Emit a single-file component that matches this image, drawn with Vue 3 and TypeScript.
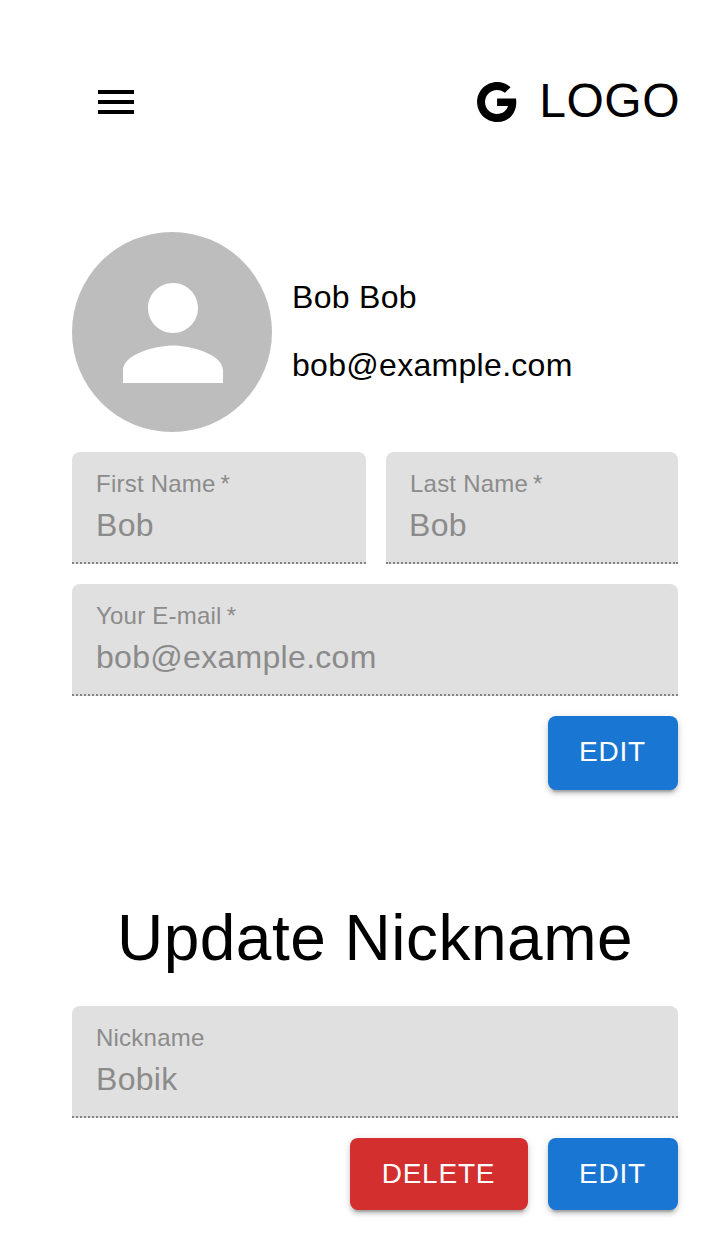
<script setup lang="ts">
import { ref } from 'vue'

const firstName = ref('Bob')
const lastName = ref('Bob')
const email = ref('bob@example.com')
const nickname = ref('Bobik')
</script>

<template>
  <div class="page">
    <header class="bar">
      <button class="menu" type="button" aria-label="menu">
        <svg viewBox="0 0 24 24"><path d="M3 18h18v-2H3v2zm0-5h18v-2H3v2zm0-7v2h18V6H3z" /></svg>
      </button>
      <div class="brand">
        <svg viewBox="0 0 24 24">
          <path
            d="M12.545,10.239v3.821h5.445c-0.712,2.315-2.647,3.972-5.445,3.972c-3.332,0-6.033-2.701-6.033-6.032s2.701-6.032,6.033-6.032c1.498,0,2.866,0.549,3.921,1.453l2.814-2.814C17.503,2.988,15.139,2,12.545,2C7.021,2,2.543,6.477,2.543,12s4.478,10,10.002,10c8.396,0,10.249-7.85,9.426-11.748L12.545,10.239z"
          />
        </svg>
        <span>LOGO</span>
      </div>
    </header>

    <section class="profile">
      <div class="avatar">
        <svg viewBox="0 0 24 24">
          <path d="M12 12c2.21 0 4-1.79 4-4s-1.79-4-4-4-4 1.79-4 4 1.79 4 4 4zm0 2c-2.67 0-8 1.34-8 4v2h16v-2c0-2.66-5.33-4-8-4z" />
        </svg>
      </div>
      <div class="identity">
        <p>{{ firstName }} {{ lastName }}</p>
        <p>{{ email }}</p>
      </div>
    </section>

    <form class="form" @submit.prevent>
      <div class="names">
        <label class="field">
          <span class="label">First Name&thinsp;*</span>
          <input v-model="firstName" disabled />
        </label>
        <label class="field last">
          <span class="label">Last Name&thinsp;*</span>
          <input v-model="lastName" disabled />
        </label>
      </div>
      <label class="field">
        <span class="label">Your E-mail&thinsp;*</span>
        <input v-model="email" disabled />
      </label>
      <div class="actions">
        <button class="btn edit tall" type="button">EDIT</button>
      </div>
    </form>

    <h2 class="title">Update Nickname</h2>

    <form class="form" @submit.prevent>
      <label class="field">
        <span class="label">Nickname</span>
        <input v-model="nickname" disabled />
      </label>
      <div class="actions">
        <button class="btn delete" type="button">DELETE</button>
        <button class="btn edit" type="button">EDIT</button>
      </div>
    </form>
  </div>
</template>

<style>
body {
  margin: 0;
  background: #fff;
}
</style>

<style scoped>
.page {
  box-sizing: border-box;
  height: 1250px;
  padding: 66px 40px 0 72px;
  overflow: hidden;
  color: #000;
  font-family: "Liberation Sans", Arial, sans-serif;
  font-size: 32px;
  letter-spacing: 0.3px;
}

.bar {
  display: flex;
  align-items: center;
  justify-content: space-between;
  height: 72px;
  margin: 0 -2px 94px 20px;
}

svg {
  display: block;
  fill: currentColor;
}

.menu {
  padding: 0;
  border: 0;
  background: none;
  color: inherit;
}

.menu svg,
.brand svg {
  width: 48px;
  height: 48px;
}

.brand {
  display: flex;
  align-items: center;
  gap: 19px;
  font-size: 48px;
  line-height: 72px;
  letter-spacing: 0.5px;
}

.brand span {
  margin-top: -2px;
}

.profile {
  display: flex;
  align-items: center;
  gap: 20px;
  margin-bottom: 20px;
}

.avatar {
  box-sizing: border-box;
  width: 200px;
  height: 200px;
  padding: 26px 24px 24px 26px;
  border-radius: 50%;
  background: #bdbdbd;
  color: #fff;
}

.avatar svg {
  width: 150px;
  height: 150px;
}

.identity {
  display: flex;
  flex-direction: column;
  gap: 20px;
  padding-bottom: 2px;
  line-height: 48px;
}

.identity p {
  margin: 0;
}

.form {
  display: flex;
  flex-direction: column;
  gap: 20px;
}

.names {
  display: grid;
  grid-template-columns: 294px 292px;
  gap: 20px;
}

.field {
  display: flex;
  flex-direction: column;
  box-sizing: border-box;
  height: 112px;
  padding: 14px 24px 0;
  border-bottom: 2px dotted rgba(0, 0, 0, 0.42);
  border-radius: 8px 8px 0 0;
  background: #e0e0e0;
  color: #8b8b8b;
}

.label {
  height: 36px;
  font-size: 24px;
  line-height: 35px;
  letter-spacing: 0.225px;
}

input {
  width: 100%;
  height: 46px;
  padding: 0;
  border: 0;
  background: none;
  color: inherit;
  font: inherit;
  letter-spacing: inherit;
}

.last input {
  margin-left: -1px;
}

.actions {
  display: flex;
  justify-content: flex-end;
  gap: 20px;
}

.btn {
  width: 130px;
  height: 72px;
  padding: 11px 1px 12px 0;
  border: 0;
  border-radius: 8px;
  color: #fff;
  font: 500 28px/49px "Liberation Sans", Arial, sans-serif;
  letter-spacing: 0.8px;
  box-shadow:
    0 6px 2px -4px rgba(0, 0, 0, 0.2),
    0 4px 4px rgba(0, 0, 0, 0.14),
    0 2px 10px rgba(0, 0, 0, 0.12);
}

.edit {
  background: #1976d2;
}

.delete {
  width: 178px;
  background: #d32f2f;
}

.tall {
  height: 74px;
  padding-bottom: 14px;
}

.title {
  margin: 100px 0 20px;
  font-size: 64px;
  font-weight: 400;
  line-height: 96px;
  letter-spacing: 0.5px;
  text-align: center;
}
</style>
